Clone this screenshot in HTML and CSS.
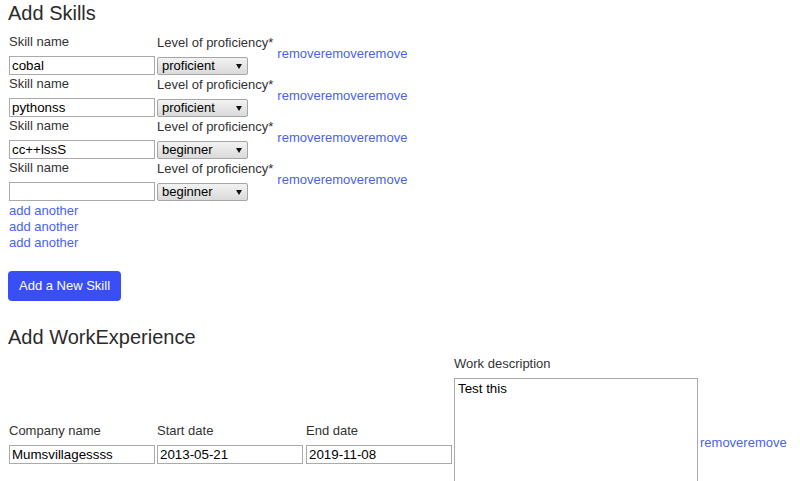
FILE: index.html
```html
<!DOCTYPE html>
<html lang="en">
<head>
    <meta charset="UTF-8">
    <meta name="viewport" content="width=device-width, initial-scale=1.0">
    <title>Add Skills</title>
    <link rel="stylesheet" href="styles.css">
</head>
<body>
    <!-- Skills -->
    <h2 class="section-title">Add Skills</h2>
    <form class="skills-form">
        <div class="skill-row">
            <div class="field">
                <label>Skill name</label>
                <input type="text" class="text-input" value="cobal">
            </div>
            <div class="field">
                <label>Level of proficiency*</label>
                <select class="level-select">
                    <option>beginner</option>
                    <option selected>proficient</option>
                </select>
            </div>
            <a href="#" class="link">removeremoveremove</a>
        </div>
        <div class="skill-row">
            <div class="field">
                <label>Skill name</label>
                <input type="text" class="text-input" value="pythonss">
            </div>
            <div class="field">
                <label>Level of proficiency*</label>
                <select class="level-select">
                    <option>beginner</option>
                    <option selected>proficient</option>
                </select>
            </div>
            <a href="#" class="link">removeremoveremove</a>
        </div>
        <div class="skill-row">
            <div class="field">
                <label>Skill name</label>
                <input type="text" class="text-input" value="cc++lssS">
            </div>
            <div class="field">
                <label>Level of proficiency*</label>
                <select class="level-select">
                    <option selected>beginner</option>
                    <option>proficient</option>
                </select>
            </div>
            <a href="#" class="link">removeremoveremove</a>
        </div>
        <div class="skill-row">
            <div class="field">
                <label>Skill name</label>
                <input type="text" class="text-input" value="">
            </div>
            <div class="field">
                <label>Level of proficiency*</label>
                <select class="level-select">
                    <option selected>beginner</option>
                    <option>proficient</option>
                </select>
            </div>
            <a href="#" class="link">removeremoveremove</a>
        </div>

        <div class="add-links">
            <a href="#" class="link">add another</a>
            <a href="#" class="link">add another</a>
            <a href="#" class="link">add another</a>
        </div>

        <button type="button" class="primary-button">Add a New Skill</button>
    </form>

    <!-- Work experience -->
    <h2 class="section-title">Add WorkExperience</h2>
    <form class="work-form">
        <div class="work-row">
            <div class="field">
                <label>Company name</label>
                <input type="text" class="text-input" value="Mumsvillagessss">
            </div>
            <div class="field">
                <label>Start date</label>
                <input type="text" class="text-input" value="2013-05-21">
            </div>
            <div class="field end-field">
                <label>End date</label>
                <input type="text" class="text-input" value="2019-11-08">
            </div>
            <div class="field">
                <label>Work description</label>
                <textarea class="description">Test this</textarea>
            </div>
            <a href="#" class="link">removeremove</a>
            <div class="dark-block"></div>
        </div>
    </form>
</body>
</html>
```

FILE: styles.css
```css
/* Reset */
* {
    box-sizing: border-box;
}

body {
    margin: 0 8px;
    font-family: 'Liberation Sans', Arial, sans-serif;
    font-size: 13px;
    color: #333;
    background-color: #fff;
}

/* Headings */
.section-title {
    margin: 0;
    font-size: 20px;
    font-weight: normal;
    line-height: 24px;
    color: #2b2b2b;
}

.section-title:first-child {
    margin-top: 1px;
    margin-bottom: 8px;
}

/* Fields */
.field {
    display: flex;
    flex-direction: column;
    flex-shrink: 0;
}

.field label {
    line-height: 18px;
    margin-bottom: 5px;
}

.text-input {
    width: 146px;
    height: 19px;
    margin: 0;
    padding: 0 2px;
    border: 1px solid #aaa;
    font-family: 'Liberation Sans', Arial, sans-serif;
    font-size: 13.33px;
    color: #000;
}

.level-select {
    appearance: none;
    -webkit-appearance: none;
    width: 91px;
    height: 18px;
    margin: 0;
    padding: 0 0 0 4px;
    border: 1px solid #a6a6a6;
    border-radius: 2px;
    background-color: #e3e3e3;
    background-image: url("data:image/svg+xml,%3Csvg xmlns='http://www.w3.org/2000/svg' width='6' height='5'%3E%3Cpolygon points='0,0 6,0 3,5' fill='%23111'/%3E%3C/svg%3E"), linear-gradient(#f2f2f2, #dadada);
    background-repeat: no-repeat, no-repeat;
    background-position: 78px 6px, 0 0;
    font-family: 'Liberation Sans', Arial, sans-serif;
    font-size: 13px;
    color: #000;
}

.link {
    color: #4a63e7;
    text-decoration: none;
    line-height: 16px;
    flex-shrink: 0;
}

/* Skills */
.skill-row {
    display: flex;
    align-items: center;
    gap: 2px;
    padding-left: 1px;
}

.skill-row .link {
    margin-left: 2px;
}

.add-links {
    display: flex;
    flex-direction: column;
    align-items: flex-start;
    padding: 2px 0 0 1px;
}

.primary-button {
    display: block;
    margin: 20px 0 24px;
    padding: 7px 11px;
    border: none;
    border-radius: 4px;
    background-color: #3a4ef6;
    color: #fff;
    font-family: 'Liberation Sans', Arial, sans-serif;
    font-size: 13px;
    line-height: 16px;
    cursor: pointer;
}

/* Work experience */
.work-form {
    margin-top: 6px;
}

.work-row {
    display: flex;
    align-items: center;
    gap: 2px;
    padding-left: 1px;
}

.work-row .end-field {
    margin-left: 1px;
}

.description {
    width: 244px;
    height: 153px;
    margin: 0;
    padding: 2px 3px;
    border: 1px solid #aaa;
    resize: none;
    font-family: 'Liberation Sans', Arial, sans-serif;
    font-size: 13.33px;
    color: #000;
}

.dark-block {
    flex-shrink: 0;
    align-self: flex-start;
    width: 20px;
    height: 30px;
    margin: 117px 0 0 6px;
    border-radius: 4px;
    background-color: #555;
}
```
